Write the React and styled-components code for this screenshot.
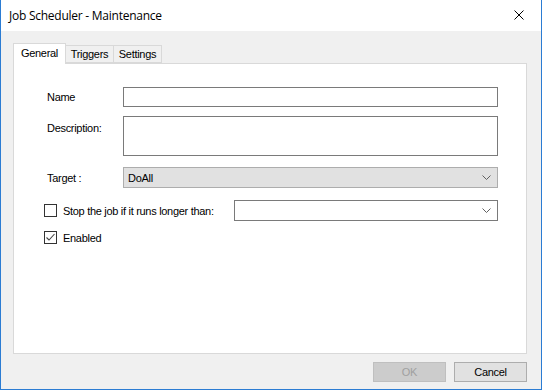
import React from "react";
import styled, { createGlobalStyle } from "styled-components";

const Global = createGlobalStyle`
  html, body { margin: 0; padding: 0; background: #ffffff; }
  * { box-sizing: border-box; }
`;

const Window = styled.div`
  width: 542px;
  height: 390px;
  border: 1px solid #2b7cd3;
  border-top: none;
  display: flex;
  flex-direction: column;
  font-family: "Liberation Sans", Arial, sans-serif;
  font-size: 11px;
  letter-spacing: -0.3px;
  color: #000;
`;

const TitleBar = styled.div`
  height: 31px;
  background: #ffffff;
  display: flex;
  align-items: center;
  justify-content: space-between;
  padding: 0 0 1px 8px;
`;

const Title = styled.span`
  font-family: "Open Sans", "Noto Sans", sans-serif;
  font-size: 12px;
  letter-spacing: -0.25px;
  color: #000;
`;

const CloseButton = styled.div`
  width: 46px;
  height: 30px;
  display: flex;
  align-items: center;
  justify-content: center;
  padding-left: 2px;
`;

const Body = styled.div`
  flex: 1;
  background: #f0f0f0;
  padding: 12px 14px 7px 12px;
  display: flex;
  flex-direction: column;
`;

const TabStrip = styled.div`
  display: flex;
  align-items: flex-end;
  height: 20px;
  position: relative;
  z-index: 1;
`;

const Tab = styled.div`
  width: ${(p) => p.$w}px;
  height: ${(p) => (p.$active ? "21px" : "18px")};
  margin-bottom: ${(p) => (p.$active ? "-1px" : "0")};
  background: ${(p) => (p.$active ? "#ffffff" : "#f0f0f0")};
  border: 1px solid #d9d9d9;
  border-bottom: ${(p) => (p.$active ? "none" : "1px solid #d9d9d9")};
  margin-left: ${(p) => (p.$first ? "0" : "-1px")};
  display: flex;
  align-items: center;
  justify-content: center;
  padding-bottom: ${(p) => (p.$active ? "2px" : "0")};
  font-size: 11px;
`;

const Panel = styled.div`
  height: 291px;
  background: #ffffff;
  border: 1px solid #d9d9d9;
  padding: 23px 28px 0 33px;
`;

const FormGrid = styled.div`
  display: grid;
  grid-template-columns: 76px 1fr;
`;

const Label = styled.div`
  display: flex;
  align-items: ${(p) => (p.$top ? "flex-start" : "center")};
  padding-top: ${(p) => (p.$top ? "6px" : "0")};
  margin-bottom: ${(p) => p.$gap || 0}px;
`;

const TextInput = styled.div`
  height: ${(p) => p.$h}px;
  border: 1px solid #7a7a7a;
  background: #ffffff;
  margin-bottom: ${(p) => p.$gap || 0}px;
`;

const Combo = styled.div`
  height: ${(p) => p.$h || 21}px;
  border: 1px solid ${(p) => (p.$flat ? "#adadad" : "#7a7a7a")};
  background: ${(p) => (p.$flat ? "#e1e1e1" : "#ffffff")};
  display: flex;
  align-items: center;
  justify-content: space-between;
  padding: 0 6px 0 4px;
  margin-bottom: ${(p) => p.$gap || 0}px;
  flex: ${(p) => (p.$grow ? 1 : "initial")};
`;

const CheckRow = styled.div`
  display: flex;
  align-items: center;
  margin-left: -3px;
  height: ${(p) => p.$h}px;
  margin-top: ${(p) => p.$mt}px;
`;

const CheckBox = styled.div`
  width: 13px;
  height: 13px;
  border: 1px solid #333333;
  background: #ffffff;
  display: flex;
  align-items: center;
  justify-content: center;
  margin-right: 6px;
  flex: none;
`;

const CheckLabel = styled.span`
  width: ${(p) => (p.$w ? `${p.$w}px` : "auto")};
  flex: none;
`;

const Footer = styled.div`
  display: flex;
  justify-content: flex-end;
  gap: 8px;
  margin-top: 8px;
`;

const Button = styled.div`
  width: ${(p) => p.$w}px;
  height: 20px;
  display: flex;
  align-items: center;
  justify-content: center;
  border: 1px solid ${(p) => (p.$disabled ? "#bfbfbf" : "#adadad")};
  background: ${(p) => (p.$disabled ? "#cccccc" : "#e1e1e1")};
  color: ${(p) => (p.$disabled ? "#a0a0a0" : "#000000")};
  font-size: 11px;
`;

const Chevron = () => (
  <svg width="9" height="5" viewBox="0 0 9 5">
    <path d="M0.5 0.5 L4.5 4.5 L8.5 0.5" fill="none" stroke="#606060" strokeWidth="1" />
  </svg>
);

const CloseIcon = () => (
  <svg width="10" height="10" viewBox="0 0 10 10">
    <path d="M0.5 0.5 L9.5 9.5 M9.5 0.5 L0.5 9.5" stroke="#000" strokeWidth="1" />
  </svg>
);

const Check = () => (
  <svg width="11" height="11" viewBox="0 0 11 11">
    <path d="M1.5 5.5 L4 8 L9.5 2" fill="none" stroke="#444" strokeWidth="1.1" />
  </svg>
);

export default function App() {
  return (
    <>
      <Global />
      <Window>
        <TitleBar>
          <Title>Job Scheduler - Maintenance</Title>
          <CloseButton>
            <CloseIcon />
          </CloseButton>
        </TitleBar>
        <Body>
          <TabStrip>
            <Tab $active $first $w={53}>General</Tab>
            <Tab $w={49}>Triggers</Tab>
            <Tab $w={49}>Settings</Tab>
          </TabStrip>
          <Panel>
            <FormGrid>
              <Label $gap={9}>Name</Label>
              <TextInput $h={20} $gap={9} />
              <Label $top $gap={11}>Description:</Label>
              <TextInput $h={40} $gap={11} />
              <Label>Target :</Label>
              <Combo $flat $h={21}>
                <span>DoAll</span>
                <Chevron />
              </Combo>
            </FormGrid>
            <CheckRow $h={21} $mt={12}>
              <CheckBox />
              <CheckLabel $w={171}>Stop the job if it runs longer than:</CheckLabel>
              <Combo $grow $h={21}>
                <span />
                <Chevron />
              </Combo>
            </CheckRow>
            <CheckRow $h={13} $mt={10}>
              <CheckBox>
                <Check />
              </CheckBox>
              <CheckLabel>Enabled</CheckLabel>
            </CheckRow>
          </Panel>
          <Footer>
            <Button $w={73} $disabled>OK</Button>
            <Button $w={73}>Cancel</Button>
          </Footer>
        </Body>
      </Window>
    </>
  );
}
